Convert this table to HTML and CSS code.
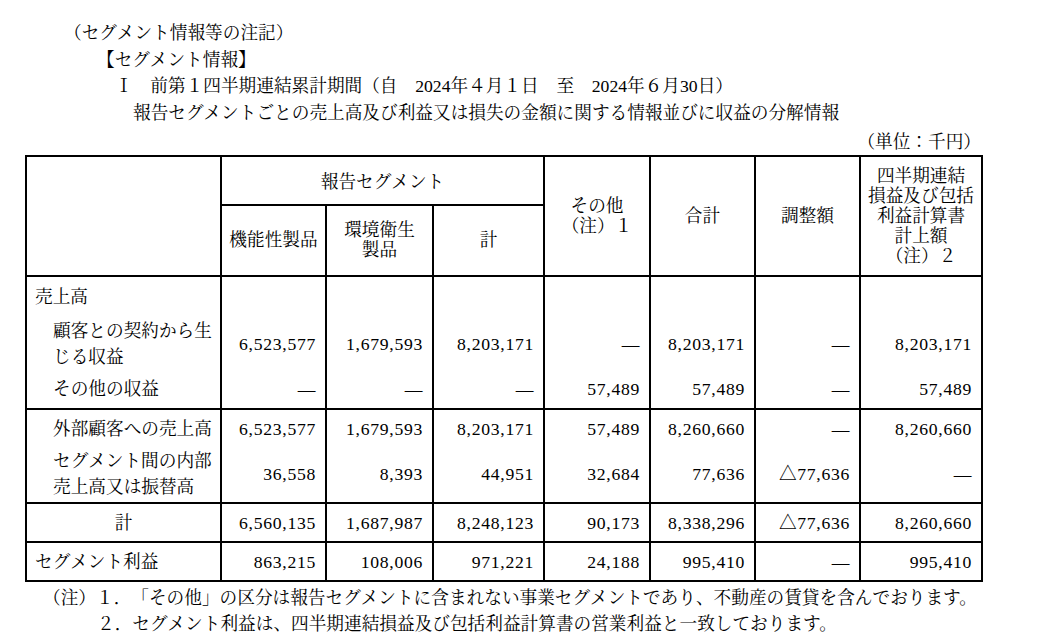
FILE: index.html
```html
<!DOCTYPE html>
<html lang="ja">
<head>
<meta charset="utf-8">
<title>セグメント情報</title>
<link rel="stylesheet" href="styles.css">
</head>
<body>
<div class="doc">
  <p class="line lv1">（セグメント情報等の注記）</p>
  <p class="line lv2">【セグメント情報】</p>
  <p class="line lv3">Ⅰ　前第１四半期連結累計期間（自　2024年４月１日　至　2024年６月30日）</p>
  <p class="line lv4">報告セグメントごとの売上高及び利益又は損失の金額に関する情報並びに収益の分解情報</p>
  <div class="tbl-wrap">
    <p class="unit">（単位：千円）</p>
    <table class="seg">
      <colgroup>
        <col class="c-label"><col class="c-a"><col class="c-b"><col class="c-c"><col class="c-d"><col class="c-e"><col class="c-f"><col class="c-g">
      </colgroup>
      <thead>
        <tr class="h1">
          <th rowspan="2" class="span2"></th>
          <th colspan="3" class="h-group">報告セグメント</th>
          <th rowspan="2" class="span2">その他<br>（注）１</th>
          <th rowspan="2" class="span2">合計</th>
          <th rowspan="2" class="span2">調整額</th>
          <th rowspan="2" class="span2">四半期連結<br>損益及び包括<br>利益計算書<br>計上額<br>（注）２</th>
        </tr>
        <tr class="h2">
          <th>機能性製品</th>
          <th>環境衛生<br>製品</th>
          <th>計</th>
        </tr>
      </thead>
      <tbody>
        <tr class="r-first">
          <td class="lbl">売上高</td>
          <td></td><td></td><td></td><td></td><td></td><td></td><td></td>
        </tr>
        <tr class="r-mid2">
          <td class="lbl ind">顧客との契約から生<br>じる収益</td>
          <td class="num">6,523,577</td>
          <td class="num">1,679,593</td>
          <td class="num">8,203,171</td>
          <td class="num">―</td>
          <td class="num">8,203,171</td>
          <td class="num">―</td>
          <td class="num">8,203,171</td>
        </tr>
        <tr class="r-last">
          <td class="lbl ind">その他の収益</td>
          <td class="num">―</td>
          <td class="num">―</td>
          <td class="num">―</td>
          <td class="num">57,489</td>
          <td class="num">57,489</td>
          <td class="num">―</td>
          <td class="num">57,489</td>
        </tr>
      </tbody>
      <tbody>
        <tr class="s2a">
          <td class="lbl ind">外部顧客への売上高</td>
          <td class="num">6,523,577</td>
          <td class="num">1,679,593</td>
          <td class="num">8,203,171</td>
          <td class="num">57,489</td>
          <td class="num">8,260,660</td>
          <td class="num">―</td>
          <td class="num">8,260,660</td>
        </tr>
        <tr class="s2b">
          <td class="lbl ind">セグメント間の内部<br>売上高又は振替高</td>
          <td class="num">36,558</td>
          <td class="num">8,393</td>
          <td class="num">44,951</td>
          <td class="num">32,684</td>
          <td class="num">77,636</td>
          <td class="num">△77,636</td>
          <td class="num">―</td>
        </tr>
      </tbody>
      <tbody>
        <tr class="single">
          <td class="lbl center">計</td>
          <td class="num">6,560,135</td>
          <td class="num">1,687,987</td>
          <td class="num">8,248,123</td>
          <td class="num">90,173</td>
          <td class="num">8,338,296</td>
          <td class="num">△77,636</td>
          <td class="num">8,260,660</td>
        </tr>
      </tbody>
      <tbody>
        <tr class="single">
          <td class="lbl">セグメント利益</td>
          <td class="num">863,215</td>
          <td class="num">108,006</td>
          <td class="num">971,221</td>
          <td class="num">24,188</td>
          <td class="num">995,410</td>
          <td class="num">―</td>
          <td class="num">995,410</td>
        </tr>
      </tbody>
    </table>
  </div>
  <div class="notes">
    <p class="note note1">（注）１．「その他」の区分は報告セグメントに含まれない事業セグメントであり、不動産の賃貸を含んでおります。</p>
    <p class="note note2">２．セグメント利益は、四半期連結損益及び包括利益計算書の営業利益と一致しております。</p>
  </div>
</div>
</body>
</html>
```

FILE: styles.css
```css
html, body {
  margin: 0;
  padding: 0;
  background: #ffffff;
}

body {
  color: #000000;
  font-family: "Liberation Serif", "Noto Serif CJK JP", "Noto Sans CJK JP", serif;
  font-size: 17.66px;
  text-spacing-trim: space-all;
}

p {
  margin: 0;
}

.doc {
  padding-top: 20px;
}

.line {
  line-height: 26.67px;
  white-space: nowrap;
}

.lv1 { padding-left: 64px; }
.lv2 { padding-left: 97px; }
.lv3 { padding-left: 115px; }
.lv4 { padding-left: 133px; }

.tbl-wrap {
  margin-left: 25px;
  width: 956px;
}

.unit {
  text-align: right;
  line-height: 26.67px;
  margin-top: 2px;
  white-space: nowrap;
}

.seg {
  border-collapse: collapse;
  table-layout: fixed;
  width: 956px;
  border: 2px solid #000000;
}

.c-label { width: 195px; }
.c-a { width: 105px; }
.c-b { width: 107px; }
.c-c { width: 111px; }
.c-d { width: 106px; }
.c-e { width: 105px; }
.c-f { width: 105px; }
.c-g { width: 122px; }

.seg th,
.seg td {
  border-left: 2px solid #000000;
  border-right: 2px solid #000000;
  padding: 0;
}

.seg thead th {
  font-weight: normal;
  text-align: center;
  vertical-align: middle;
  line-height: 20px;
  border: 2px solid #000000;
  white-space: nowrap;
}

.seg thead .h-group {
  padding: 15px 0 12px;
}

.seg thead .h2 th {
  padding: 14px 0 15px;
}

.seg thead th.span2 {
  padding: 0;
}

.seg tbody {
  border-top: 2px solid #000000;
}

.seg td {
  line-height: 26px;
  vertical-align: middle;
  white-space: nowrap;
}

.seg .lbl {
  text-align: left;
  padding-left: 8px;
}

.seg .lbl.ind {
  padding-left: 26px;
}

.seg .lbl.center {
  text-align: center;
  padding-left: 0;
}

.seg .num {
  text-align: right;
  padding-right: 9px;
  letter-spacing: 0.7px;
}

.r-first td { padding-top: 7px; padding-bottom: 4px; }
.r-mid2 td { padding-top: 4px; padding-bottom: 2px; }
.r-last td { padding-top: 4px; padding-bottom: 6px; }
.s2a td { padding-top: 6px; padding-bottom: 3px; }
.s2b td { padding-top: 3px; padding-bottom: 2px; }
.single td { padding-top: 6px; padding-bottom: 5px; }

.notes {
  margin-top: 3px;
}

.note {
  line-height: 26px;
  white-space: nowrap;
}

.note1 { padding-left: 43px; }
.note2 { padding-left: 97px; }
```
